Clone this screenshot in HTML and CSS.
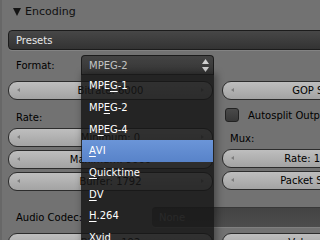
FILE: index.html
```html
<!DOCTYPE html>
<html>
<head>
<meta charset="utf-8">
<link rel="stylesheet" href="styles.css">
</head>
<body>
<div class="panel">
  <div class="header">
    <svg class="tri" width="8" height="8" viewBox="0 0 8 8"><polygon points="0,0 8,0 4,8" fill="#141414"/></svg>
    <span>Encoding</span>
  </div>
  <div class="presets">Presets</div>
  <div class="format-row">
    <span class="label">Format:</span>
    <div class="menubtn">
      <span>MPEG-2</span>
      <svg class="updown" width="7" height="13" viewBox="0 0 7 13"><polygon points="3.5,0 7,5 0,5" fill="#cfcfcf"/><polygon points="0,8 7,8 3.5,13" fill="#cfcfcf"/></svg>
    </div>
  </div>
  <div class="cols">
    <div class="col">
      <div class="num">Bitrate: 6000</div>
      <div class="lbl-row">Rate:</div>
      <div class="num">Minimum: 0</div>
      <div class="num gap">Maximum: 9000</div>
      <div class="num gap">Buffer: 1792</div>
    </div>
    <div class="col">
      <div class="num">GOP Size: 12</div>
      <div class="check-row"><span class="check"></span><span>Autosplit Output</span></div>
      <div class="lbl-row mux">Mux:</div>
      <div class="num">Rate: 10080000</div>
      <div class="num gap">Packet Size: 2048</div>
    </div>
  </div>
  <div class="audio-row">
    <span class="label">Audio Codec:</span>
    <div class="nonefield">None</div>
  </div>
  <div class="cols last">
    <div class="col"><div class="num">Bitrate: 192</div></div>
    <div class="col"><div class="num">Volume: 1.000</div></div>
  </div>

  <div class="menu">
    <div class="item">MPE<u>G</u>-1</div>
    <div class="item">MP<u>E</u>G-2</div>
    <div class="item">M<u>P</u>EG-4</div>
    <div class="item sel"><u>A</u>VI</div>
    <div class="item"><u>Q</u>uicktime</div>
    <div class="item"><u>D</u>V</div>
    <div class="item"><u>H</u>.264</div>
    <div class="item"><u>X</u>vid</div>
  </div>
</div>
</body>
</html>
```

FILE: styles.css
```css
html, body {
  margin: 0;
  padding: 0;
}
body {
  width: 320px;
  height: 240px;
  overflow: hidden;
  background: #727272;
  font-family: "DejaVu Sans", sans-serif;
  font-size: 10px;
  color: #000;
}
.panel {
  position: relative;
  width: 440px;
  height: 240px;
  border-left: 2px solid #676767;
  box-sizing: border-box;
}
.header {
  height: 22px;
  display: flex;
  align-items: center;
  padding-left: 11px;
  font-size: 11px;
  color: #101010;
}
.header .tri {
  margin-right: 4px;
  margin-top: 1px;
}
.presets {
  margin-top: 8px;
  margin-left: 6px;
  width: 420px;
  height: 20px;
  box-sizing: border-box;
  border: 1px solid #1c1c1c;
  border-radius: 4px;
  background: linear-gradient(#474747, #333333);
  color: #e8e8e8;
  display: flex;
  align-items: center;
  padding-left: 7px;
  box-shadow: 0 1px 0 rgba(255,255,255,0.12);
}
.format-row {
  margin-top: 5px;
  height: 20px;
  display: flex;
  align-items: center;
}
.label {
  padding-left: 14px;
  width: 65px;
  flex: none;
}
.menubtn {
  width: 133px;
  height: 20px;
  box-sizing: border-box;
  border: 1px solid #1c1c1c;
  border-bottom: none;
  border-radius: 4px 4px 0 0;
  background: linear-gradient(#434343, #353535);
  color: #c4c4c4;
  display: flex;
  align-items: center;
  justify-content: space-between;
  padding: 0 4px 0 7px;
}
.cols {
  display: grid;
  grid-template-columns: 205px 205px;
  column-gap: 9px;
  margin-left: 6px;
  margin-top: 6px;
}
.col {
  display: flex;
  flex-direction: column;
}
.num {
  height: 19px;
  box-sizing: border-box;
  border: 1px solid #2c2c2c;
  border-radius: 9px;
  background: linear-gradient(#bebebe, #a3a3a3);
  display: flex;
  align-items: center;
  justify-content: center;
  position: relative;
  white-space: nowrap;
}
.num::before, .num::after {
  content: "";
  position: absolute;
  top: 6px;
  border-top: 2.5px solid transparent;
  border-bottom: 2.5px solid transparent;
}
.num::before {
  left: 8px;
  border-right: 3px solid #7c7c7c;
}
.num::after {
  right: 8px;
  border-left: 3px solid #7c7c7c;
}
.num.gap {
  margin-top: 3px;
}
.lbl-row {
  height: 22px;
  margin-top: 6px;
  display: flex;
  align-items: center;
  padding-left: 8px;
}
.check-row {
  height: 22px;
  margin-top: 4px;
  display: flex;
  align-items: center;
  padding-left: 3px;
}
.check {
  width: 14px;
  height: 14px;
  box-sizing: border-box;
  border: 1px solid #222;
  border-radius: 3px;
  background: linear-gradient(#4a4a4a, #383838);
  margin-right: 9px;
}
.lbl-row.mux {
  margin-top: 1px;
}
.audio-row {
  margin-top: 16px;
  height: 20px;
  display: flex;
  align-items: center;
}
.audio-row .label {
  width: 136px;
}
.nonefield {
  flex: 1;
  height: 20px;
  box-sizing: border-box;
  border-top: 1px solid #383838;
  border-radius: 4px 0 0 4px;
  background: linear-gradient(#434343, #4d4d4d);
  color: #8c8c8c;
  display: flex;
  align-items: center;
  padding-left: 7px;
  box-shadow: 0 1px 0 rgba(255,255,255,0.1);
}
.cols.last {
  margin-top: 6px;
}
.menu {
  position: absolute;
  left: 79px;
  top: 74px;
  width: 133px;
  height: 180px;
  padding-top: 1px;
  box-sizing: border-box;
  background: rgba(22,22,22,0.84);
  box-shadow: 2px 0 7px 1px rgba(0,0,0,0.35);
  color: #fff;
}
.item {
  height: 21.7px;
  display: flex;
  align-items: center;
  padding-left: 8px;
}
.item u {
  text-decoration-thickness: 1px;
  text-underline-offset: 2px;
}
.item.sel {
  background: linear-gradient(#6b95d8, #5883c9);
  margin: 0 1px;
  padding-left: 7px;
}
```
